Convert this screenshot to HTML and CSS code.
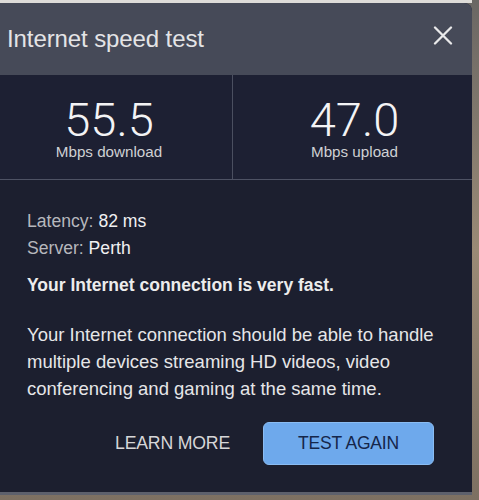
FILE: index.html
```html
<!DOCTYPE html>
<html lang="en">
<head>
<meta charset="utf-8">
<title>Internet speed test</title>
<link rel="stylesheet" href="styles.css">
</head>
<body>
<div class="page">
  <div class="panel">
    <header class="titlebar">
      <h1 class="title">Internet speed test</h1>
      <button class="close" aria-label="Close">
        <svg width="20" height="19" viewBox="0 0 20 19"><path d="M2 1.5 L18 17.5 M18 1.5 L2 17.5" stroke="#e9e9ea" stroke-width="2.3" stroke-linecap="round" fill="none"/></svg>
      </button>
    </header>
    <section class="stats">
      <div class="stat stat-down">
        <div class="num">55.5</div>
        <div class="unit">Mbps download</div>
      </div>
      <div class="stat stat-up">
        <div class="num">47.0</div>
        <div class="unit">Mbps upload</div>
      </div>
    </section>
    <section class="details">
      <div class="meta">
        <div class="line"><span class="key">Latency:</span> <span class="val">82 ms</span></div>
        <div class="line"><span class="key">Server:</span> <span class="val">Perth</span></div>
      </div>
      <p class="verdict">Your Internet connection is very fast.</p>
      <p class="desc">Your Internet connection should be able to handle multiple devices streaming HD videos, video conferencing and gaming at the same time.</p>
      <div class="actions">
        <button class="btn-text">LEARN MORE</button>
        <button class="btn-primary">TEST AGAIN</button>
      </div>
    </section>
  </div>
  <div class="bottom-edge"></div>
</div>
</body>
</html>
```

FILE: styles.css
```css
* { box-sizing: border-box; }
html, body { margin: 0; padding: 0; }
body {
  width: 479px;
  height: 500px;
  overflow: hidden;
  background: linear-gradient(to bottom, #6a6764 0%, #9a8a76 50%, #7d7062 100%);
  font-family: "Liberation Sans", Arial, sans-serif;
}
.page {
  padding-top: 3px;
  background: linear-gradient(to bottom, #dedcd9 0, #dedcd9 3px, transparent 3px);
  width: 472px;
}
.panel {
  width: 472px;
  height: 489px;
  background: #1e2132;
  border-top-right-radius: 8px;
  overflow: hidden;
  display: flex;
  flex-direction: column;
}
.titlebar {
  height: 72px;
  background: #464a58;
  display: flex;
  align-items: center;
  justify-content: space-between;
  padding: 0 19px 0 7px;
}
.title {
  margin: 0;
  font-size: 24px;
  line-height: 28px;
  font-weight: normal;
  color: #e4e4e6;
  letter-spacing: -0.1px;
}
.close {
  background: none;
  border: 0;
  padding: 0;
  width: 20px;
  height: 19px;
  display: flex;
  margin-top: -8px;
}
.stats {
  display: grid;
  grid-template-columns: 233px 1fr;
  border-bottom: 1px solid #4e5264;
  background: #1d2033;
}
.stat {
  padding: 21px 0 18px;
  display: flex;
  flex-direction: column;
  align-items: center;
  color: #f1f1f3;
}
.stat-down {
  border-right: 1px solid #4b4f60;
  padding-right: 14px;
}
.stat-up {
  padding-left: 4px;
}
.num {
  font-family: Roboto, "Liberation Sans", sans-serif;
  font-weight: 300;
  font-size: 47px;
  line-height: 47px;
  color: #f3f3f5;
}
.unit {
  font-size: 15.2px;
  line-height: 18px;
  color: #cfd0d4;
}
.details {
  padding: 28px 30px 0 27px;
  flex: 1;
  background: #1c1f2f;
}
.line {
  font-size: 17.6px;
  line-height: 27px;
}
.key { color: #b6b7bd; }
.val { color: #f0f0f2; }
.verdict {
  margin: 10px 0 0;
  font-size: 17.5px;
  line-height: 27px;
  font-weight: bold;
  color: #ececec;
}
.desc {
  margin: 22px 0 0;
  font-size: 18.5px;
  line-height: 27px;
  color: #e6e6e8;
}
.actions {
  margin-top: 20px;
  margin-right: 8px;
  display: flex;
  justify-content: flex-end;
  align-items: center;
  gap: 33px;
}
.btn-text {
  background: none;
  border: 0;
  padding: 0;
  font-family: inherit;
  font-size: 17.7px;
  color: #d6d6d8;
  letter-spacing: -0.2px;
}
.btn-primary {
  width: 171px;
  height: 43px;
  background: #6ea9ec;
  border: 1px solid #8abcf2;
  border-radius: 6px;
  font-family: inherit;
  font-size: 17.5px;
  color: #15264a;
  letter-spacing: -0.2px;
}
.bottom-edge {
  height: 3px;
  background: #5d606c;
  width: 472px;
}
```
